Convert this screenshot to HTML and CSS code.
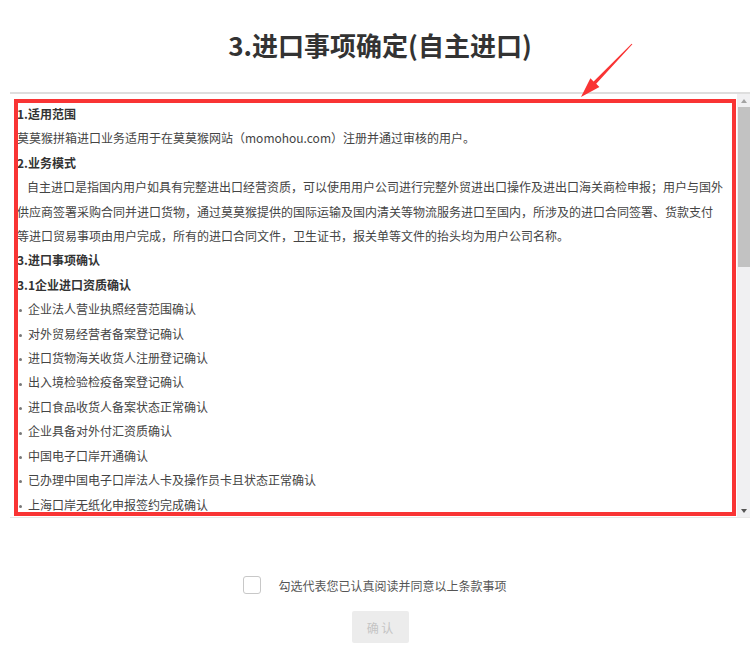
FILE: index.html
```html
<!DOCTYPE html>
<html>
  <head>
    <meta charset="utf-8">
    <meta name="viewport" content="width=device-width, initial-scale=1">
    <title>进口事项确定</title>
    <link rel="stylesheet" href="styles.css">
  </head>
  <body>
    <div class="page">
      <h1 class="title">3.进口事项确定(自主进口)</h1>

      <div class="terms">
        <div class="terms-body">
          <p class="head">1.适用范围</p>
          <p>莫莫猴拼箱进口业务适用于在莫莫猴网站（momohou.com）注册并通过审核的用户。</p>
          <p class="head">2.业务模式</p>
          <p class="indent">自主进口是指国内用户如具有完整进出口经营资质，可以使用用户公司进行完整外贸进出口操作及进出口海关商检申报；用户与国外供应商签署采购合同并进口货物，通过莫莫猴提供的国际运输及国内清关等物流服务进口至国内，所涉及的进口合同签署、货款支付等进口贸易事项由用户完成，所有的进口合同文件，卫生证书，报关单等文件的抬头均为用户公司名称。</p>
          <p class="head">3.进口事项确认</p>
          <p class="head">3.1企业进口资质确认</p>
          <ul class="dots">
            <li>企业法人营业执照经营范围确认</li>
            <li>对外贸易经营者备案登记确认</li>
            <li>进口货物海关收货人注册登记确认</li>
            <li>出入境检验检疫备案登记确认</li>
            <li>进口食品收货人备案状态正常确认</li>
            <li>企业具备对外付汇资质确认</li>
            <li>中国电子口岸开通确认</li>
            <li>已办理中国电子口岸法人卡及操作员卡且状态正常确认</li>
            <li>上海口岸无纸化申报签约完成确认</li>
          </ul>
        </div>
        <div class="scrollbar">
          <span class="sb-up"></span>
          <div class="sb-track"><div class="sb-thumb"></div></div>
          <span class="sb-down"></span>
        </div>
      </div>

      <div class="agree">
        <label>
          <input type="checkbox">
          <span>勾选代表您已认真阅读并同意以上条款事项</span>
        </label>
      </div>

      <div class="actions">
        <button class="confirm" disabled>确 认</button>
      </div>
    </div>

    <svg class="annot" width="750" height="662" viewBox="0 0 750 662">
      <rect x="16" y="101" width="718" height="413" fill="none" stroke="#f93434" stroke-width="4"/>
      <polygon fill="#f93434" points="632.4,44.3 596.2,83.8 599.4,87 581,97 590.4,78.2 593.6,81.4 631.6,43.7"/>
    </svg>
  </body>
</html>
```

FILE: styles.css
```css
body {
  margin: 0;
  position: relative;
  font-family: "Noto Sans CJK SC", sans-serif;
  color: #333;
  overflow: hidden;
}

.page {
  margin-left: 10px;
}

.title {
  margin: 27px 0 29px;
  font-size: 26px;
  line-height: 36px;
  font-weight: bold;
  text-align: center;
  color: #333;
}

.terms {
  box-sizing: border-box;
  height: 426px;
  display: flex;
  border-top: 2px solid #dedede;
  border-bottom: 1px solid #e8e8e8;
}

.terms-body {
  flex: 1;
  min-width: 0;
  padding: 8px 13px 0 7px;
  overflow: hidden;
  font-size: 12px;
  line-height: 24.4px;
  color: #444;
}

.terms-body p,
.terms-body ul {
  margin: 0;
  padding: 0;
}

.terms-body .head {
  font-weight: bold;
  color: #333;
}

.terms-body .indent {
  text-indent: 10px;
}

.dots {
  list-style: none;
}

.dots li::before {
  content: "";
  display: inline-block;
  width: 3px;
  height: 3px;
  margin: 0 6px 0 2px;
  border-radius: 50%;
  background: #777;
  vertical-align: middle;
}

/* fake scrollbar, the page is shot without native ones */
.scrollbar {
  width: 13px;
  display: flex;
  flex-direction: column;
  background: #f0f0f2;
}

.sb-up,
.sb-down {
  height: 13px;
  display: flex;
  align-items: center;
  justify-content: center;
}

.sb-up::before {
  content: "";
  border-left: 3.5px solid transparent;
  border-right: 3.5px solid transparent;
  border-bottom: 4px solid #a3a3a3;
}

.sb-down::before {
  content: "";
  border-left: 3.5px solid transparent;
  border-right: 3.5px solid transparent;
  border-top: 4px solid #555;
}

.sb-track {
  flex: 1;
}

.sb-thumb {
  height: 160px;
  margin-left: 1px;
  background: #c2c2c2;
}

.agree {
  margin-top: 58px;
  padding-right: 10px;
  display: flex;
  justify-content: center;
}

.agree label {
  display: flex;
  align-items: center;
  font-size: 12px;
  color: #555;
}

.agree input {
  appearance: none;
  box-sizing: border-box;
  width: 18px;
  height: 18px;
  margin: 0 17px 0 0;
  border: 1px solid #c8c8c8;
  border-radius: 3px;
  background: #fff;
}

.actions {
  margin-top: 17px;
  display: flex;
  justify-content: center;
}

.confirm {
  width: 57px;
  height: 32px;
  padding: 0;
  border: none;
  border-radius: 2px;
  background: #ececec;
  color: #c4c4c4;
  font-family: inherit;
  font-size: 12px;
}

.annot {
  position: absolute;
  left: 0;
  top: 0;
  pointer-events: none;
}
```
